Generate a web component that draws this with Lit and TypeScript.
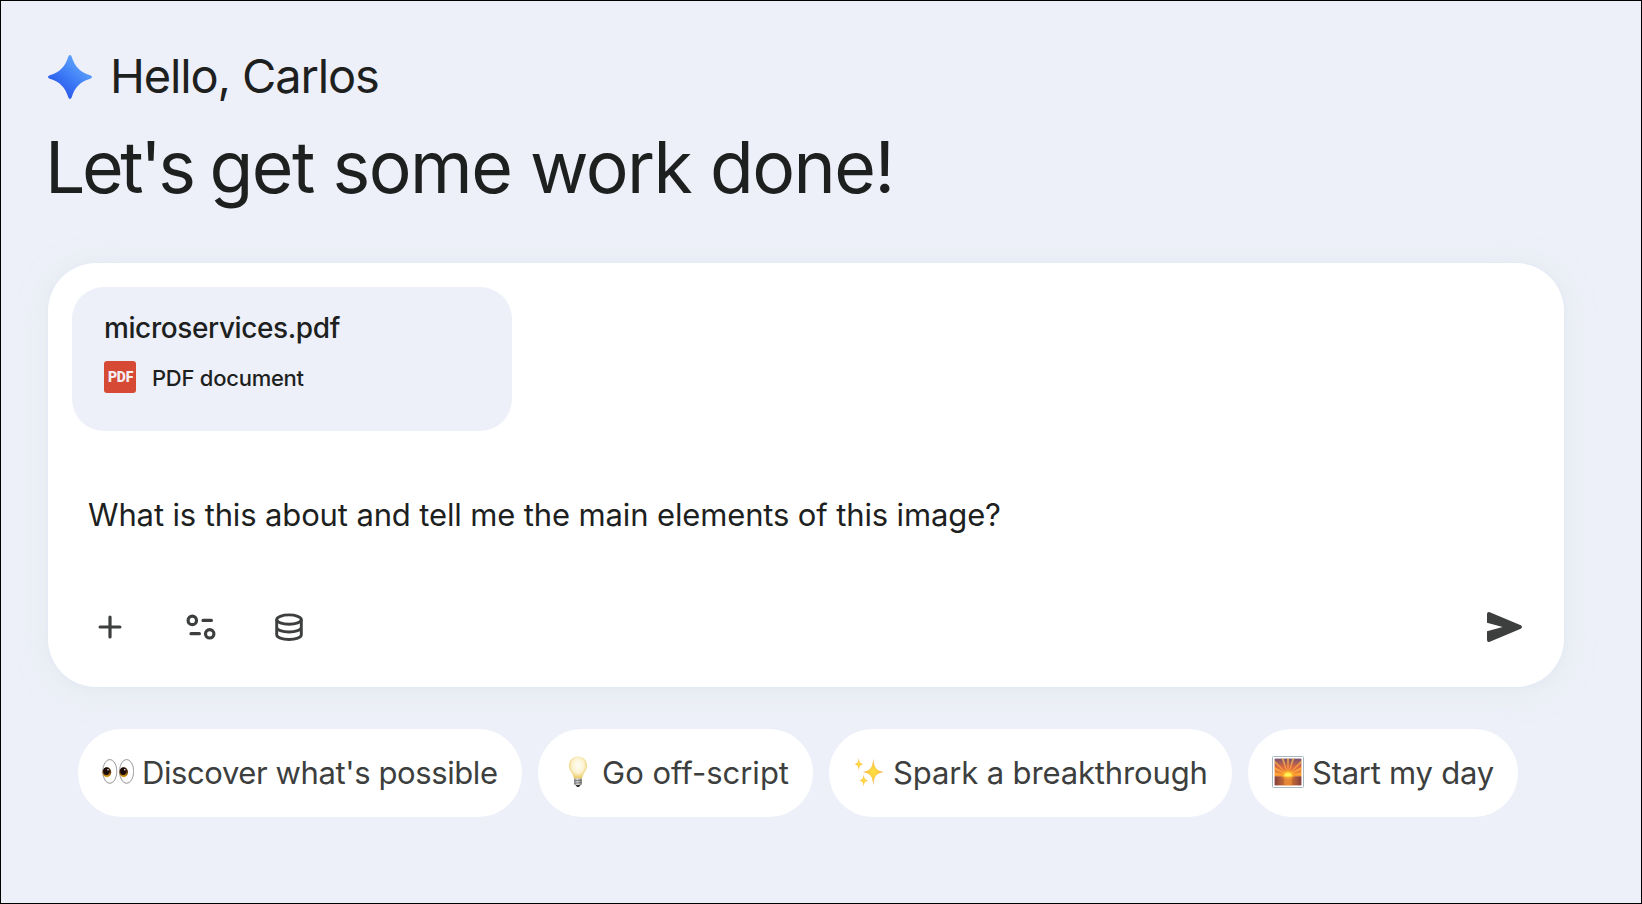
import { LitElement, html, css, svg } from 'lit';
import { customElement, property } from 'lit/decorators.js';

const eyes = svg`
  <defs>
    <radialGradient id="ball" cx=".5" cy=".5" r=".52">
      <stop offset=".8" stop-color="#fff"/>
      <stop offset="1" stop-color="#d9d9d9"/>
    </radialGradient>
    <linearGradient id="iris" x1="0" y1="0" x2="0" y2="1">
      <stop offset=".4" stop-color="#4a2a0c"/>
      <stop offset="1" stop-color="#e8a713"/>
    </linearGradient>
  </defs>
  <ellipse cx="7.8" cy="15.4" rx="7.1" ry="12" fill="url(#ball)" stroke="#8f8f8f" stroke-width=".8"/>
  <ellipse cx="24.6" cy="15.4" rx="7.1" ry="12" fill="url(#ball)" stroke="#8f8f8f" stroke-width=".8"/>
  <ellipse cx="4.9" cy="16.2" rx="4.3" ry="5" fill="url(#iris)"/>
  <ellipse cx="21.7" cy="16.2" rx="4.3" ry="5" fill="url(#iris)"/>
  <ellipse cx="4.4" cy="15.2" rx="3" ry="3.7" fill="#1d0d05"/>
  <ellipse cx="21.2" cy="15.2" rx="3" ry="3.7" fill="#1d0d05"/>
  <circle cx="6" cy="13.7" r=".8" fill="#fff"/>
  <circle cx="22.8" cy="13.7" r=".8" fill="#fff"/>`;

const bulb = svg`
  <defs>
    <radialGradient id="glass" cx=".5" cy=".4" r=".56">
      <stop offset="0" stop-color="#fffef6"/>
      <stop offset=".6" stop-color="#fbf2cf"/>
      <stop offset="1" stop-color="#eccb67"/>
    </radialGradient>
    <linearGradient id="screw" x1="0" x2="1">
      <stop offset="0" stop-color="#777"/>
      <stop offset=".4" stop-color="#e2e2e2"/>
      <stop offset="1" stop-color="#747474"/>
    </linearGradient>
  </defs>
  <path d="M16 .6C10.8.6 6.9 4.4 6.9 9.6c0 4.2 2.2 6.2 3.7 8.9.9 1.6 1 3.5 2 4.3h6.8c1-.8 1.1-2.7 2-4.3 1.5-2.7 3.7-4.7 3.7-8.9C25.1 4.4 21.2.6 16 .6z" fill="url(#glass)"/>
  <path d="M12.2 22.5h7.6v5.2c0 1-.7 1.5-1.5 1.6h-4.6c-.8-.1-1.500-.6-1.500-1.6z" fill="url(#screw)"/>
  <path d="M12.2 24.8l7.6-.6M12.2 27.2l7.6-.6" stroke="#666" stroke-width=".8"/>
  <path d="M13.6 29h4.8l-1.4 2.1h-2z" fill="#303030"/>`;

const sparkles = svg`
  <defs>
    <radialGradient id="gold" cx=".5" cy=".5" r=".5">
      <stop offset="0" stop-color="#ffe03c"/>
      <stop offset=".5" stop-color="#fccb45"/>
      <stop offset="1" stop-color="#ee9f55"/>
    </radialGradient>
  </defs>
  <path d="M20.3 2.8c1 9 2.5 11.5 10.5 13.2-8 1.7-9.5 4.2-10.5 13.2-1-9-2.5-11.5-10.5-13.2 8-1.7 9.5-4.2 10.5-13.2z" fill="url(#gold)"/>
  <path d="M5.8 2c.6 4.3 1.2 5.4 4.3 6.2-3.1.8-3.7 1.9-4.3 6.2-.6-4.3-1.2-5.4-4.3-6.2C4.6 7.4 5.2 6.3 5.8 2z" fill="url(#gold)"/>
  <path d="M10.7 18.6c.6 4.2 1.3 5.2 4.5 6-3.2.8-3.9 1.8-4.5 6-.6-4.2-1.3-5.2-4.5-6 3.2-.8 3.9-1.8 4.5-6z" fill="url(#gold)"/>`;

const sunrise = svg`
  <defs>
    <linearGradient id="sky" x1="0" y1="0" x2="0" y2="1">
      <stop offset="0" stop-color="#75506f"/>
      <stop offset=".45" stop-color="#dc6840"/>
      <stop offset="1" stop-color="#ff9a27"/>
    </linearGradient>
    <linearGradient id="sea" x1="0" x2="1">
      <stop offset="0" stop-color="#843f3d"/>
      <stop offset=".5" stop-color="#e27c30"/>
      <stop offset="1" stop-color="#843f3d"/>
    </linearGradient>
    <radialGradient id="glow" cx=".5" cy=".5" r=".5">
      <stop offset="0" stop-color="#fff27a"/>
      <stop offset=".45" stop-color="#ffc52e"/>
      <stop offset="1" stop-color="#ff8b24" stop-opacity="0"/>
    </radialGradient>
  </defs>
  <rect x=".5" y=".5" width="31" height="31" rx="1" fill="#fff" stroke="#a9b6bb"/>
  <rect x="2.6" y="2.6" width="26.8" height="18" fill="url(#sky)"/>
  <path d="M16 19L9.5 2.6h2.2zM16 19l-1-16.4h2zM16 19L20.3 2.6h2.2zM16 19L2.6 4.2v2.6zM16 19L29.4 4.2v2.6zM16 19L2.6 11v2.2zM16 19l13.4-8v2.2zM16 19L2.6 17v1.5zM16 19l13.4-2v1.5z" fill="#ffc04a" opacity=".7"/>
  <rect x="2.6" y="20.3" width="26.8" height="9.1" fill="url(#sea)"/>
  <ellipse cx="16" cy="18.8" rx="8" ry="5.5" fill="url(#glow)"/>
  <path d="M12.4 20.3a3.6 3.6 0 0 1 7.2 0z" fill="#fff05c"/>
  <path d="M12 21h8v8.4h-8z" fill="#f0953a" opacity=".55"/>`;

const suggestions = [
  { icon: eyes, label: "Discover what's possible", width: 444, tracking: -0.4 },
  { icon: bulb, label: 'Go off-script', width: 275, tracking: 0 },
  { icon: sparkles, label: 'Spark a breakthrough', width: 403, tracking: -0.13 },
  { icon: sunrise, label: 'Start my day', width: 270, tracking: -0.25 },
];

@customElement('suggestion-chip')
export class SuggestionChip extends LitElement {
  @property() label = '';
  @property({ attribute: false }) icon: unknown;

  static styles = css`
    :host {
      display: block;
      flex: none;
    }
    .chip {
      box-sizing: border-box;
      display: flex;
      align-items: center;
      gap: 8px;
      width: 100%;
      height: 88px;
      padding: 0 0 2px 24px;
      border: 0;
      border-radius: 44px;
      background: #fff;
      color: #3d3f3e;
      font: inherit;
      letter-spacing: inherit;
      white-space: nowrap;
    }
    .chip svg {
      flex: none;
      width: 32px;
      height: 32px;
    }
  `;

  render() {
    return html`
      <button class="chip">
        <svg viewBox="0 0 32 32">${this.icon}</svg>
        <span>${this.label}</span>
      </button>
    `;
  }
}

@customElement('file-card')
export class FileCard extends LitElement {
  @property() name = '';
  @property() kind = '';

  static styles = css`
    :host {
      box-sizing: border-box;
      display: block;
      width: 440px;
      height: 144px;
      padding: 23px 32px;
      border-radius: 32px;
      background: #edf0f8;
      color: #1e1f1f;
    }
    .name {
      font-size: 28px;
      font-weight: 500;
      line-height: 36px;
      letter-spacing: -0.4px;
    }
    .meta {
      display: flex;
      align-items: center;
      gap: 16px;
      height: 32px;
      margin-top: 15px;
    }
    .kind {
      padding-top: 2px;
      font-size: 22px;
      font-weight: 500;
      letter-spacing: -0.25px;
    }
    .badge {
      box-sizing: border-box;
      display: flex;
      align-items: center;
      justify-content: center;
      width: 32px;
      height: 32px;
      padding-left: 1px;
      border-radius: 3px;
      background: #d64a35;
      color: #f3edf4;
      font: 900 14px Roboto, sans-serif;
      letter-spacing: -0.2px;
    }
  `;

  render() {
    return html`
      <div class="name">${this.name}</div>
      <div class="meta">
        <span class="badge">PDF</span>
        <span class="kind">${this.kind}</span>
      </div>
    `;
  }
}

@customElement('app-root')
export class AppRoot extends LitElement {
  static styles = css`
    :host {
      box-sizing: border-box;
      display: block;
      height: 904px;
      padding: 48px 77px 0 47px;
      border: 1px solid #000;
      background: #edf0f8;
      color: #1e1f1f;
      font-family: Inter, 'Open Sans', sans-serif;
      overflow: hidden;
    }
    .greeting {
      display: flex;
      align-items: center;
      gap: 18px;
      height: 56px;
    }
    .greeting svg {
      width: 44px;
      height: 44px;
    }
    .hello {
      padding-bottom: 3px;
      font-size: 47px;
      line-height: 56px;
      letter-spacing: -1.15px;
    }
    h1 {
      margin: 20px 0 54px -3px;
      font-size: 71.5px;
      font-weight: 400;
      line-height: 84px;
      letter-spacing: -1.5px;
      white-space: nowrap;
    }
    .lead {
      letter-spacing: -3.4px;
    }
    .composer {
      box-sizing: border-box;
      height: 424px;
      padding: 24px;
      border-radius: 48px;
      background: #fff;
      box-shadow: 0 0 1px 1px #e5ebf5, 0 2px 14px rgba(208, 221, 240, 0.35),
        0 4px 28px rgba(234, 240, 235, 0.5);
    }
    .prompt {
      margin: 64px 0 0 16px;
      font-size: 31px;
      line-height: 40px;
      letter-spacing: -0.135px;
      white-space: nowrap;
    }
    .toolbar {
      display: flex;
      align-items: center;
      height: 48px;
      margin: 68px 16px 0 17px;
      color: #3d3f3e;
    }
    .tool {
      display: flex;
      padding: 0;
      border: 0;
      background: none;
      color: inherit;
    }
    .tool svg {
      width: 42px;
      height: 42px;
    }
    .tool + .tool {
      margin-left: 49px;
    }
    .tool.data {
      margin-left: 46px;
    }
    .tool.send {
      margin-left: auto;
    }
    .suggestions {
      display: flex;
      gap: 16px;
      margin: 42px 0 0 30px;
      font-size: 31px;
    }
  `;

  render() {
    return html`
      <div class="greeting">
        <svg viewBox="0 0 44 44">
          <defs>
            <linearGradient id="spark" x1="10" y1="34" x2="30" y2="10" gradientUnits="userSpaceOnUse">
              <stop offset="0" stop-color="#2d5cea"/>
              <stop offset=".5" stop-color="#3c7bf7"/>
              <stop offset="1" stop-color="#589bfa"/>
            </linearGradient>
          </defs>
          <path d="M22 0Q23.2 0 23.7 1.8C27 12 32 17 42.2 20.3Q44 21 44 22Q44 23 42.2 23.7C32 27 27 32 23.7 42.2Q23.2 44 22 44Q20.8 44 20.3 42.2C17 32 12 27 1.8 23.7Q0 23 0 22Q0 21 1.8 20.3C12 17 17 12 20.3 1.8Q20.8 0 22 0Z" fill="url(#spark)"/>
        </svg>
        <div class="hello">Hello, Carlos</div>
      </div>
      <h1><span class="lead">Let's </span>get some work done!</h1>

      <div class="composer">
        <file-card name="microservices.pdf" kind="PDF document"></file-card>
        <div class="prompt">What is this about and tell me the main elements of this image?</div>
        <div class="toolbar">
          <button class="tool" aria-label="Add">
            <svg viewBox="0 0 42 42" fill="none" stroke="currentColor" stroke-width="3.2" stroke-linecap="round">
              <path d="M21 11.1v19.8M11.1 21h19.8"/>
            </svg>
          </button>
          <button class="tool" aria-label="Settings">
            <svg viewBox="0 0 42 42" fill="none" stroke="currentColor" stroke-width="3.2" stroke-linecap="round">
              <circle cx="12.3" cy="14.4" r="4.2"/>
              <path d="M23 14.4h8.4M11 27.7h8.4"/>
              <circle cx="29.7" cy="27.8" r="4.2"/>
            </svg>
          </button>
          <button class="tool data" aria-label="Data sources">
            <svg viewBox="0 0 42 42" fill="none" stroke="currentColor" stroke-width="2.9">
              <ellipse cx="21" cy="13.6" rx="12.3" ry="4.7"/>
              <path d="M8.7 13.6v15.2c0 2.6 5.5 4.7 12.3 4.7s12.3-2.1 12.3-4.7V13.6M8.7 21.3c0 2.6 5.5 4.7 12.3 4.7s12.3-2.1 12.3-4.7"/>
            </svg>
          </button>
          <button class="tool send" aria-label="Send">
            <svg viewBox="0 0 42 42" fill="currentColor">
              <path d="M5 8.2Q5 5.3 7.8 6.2L38.8 19.3Q41.2 21 38.8 22.7L7.8 35.8Q5 36.7 5 33.8V25.2L20.6 21L5 16.8Z"/>
            </svg>
          </button>
        </div>
      </div>

      <div class="suggestions">
        ${suggestions.map(
          (s) => html`<suggestion-chip
            .icon=${s.icon}
            label=${s.label}
            style="width: ${s.width}px; letter-spacing: ${s.tracking}px"
          ></suggestion-chip>`
        )}
      </div>
    `;
  }
}
